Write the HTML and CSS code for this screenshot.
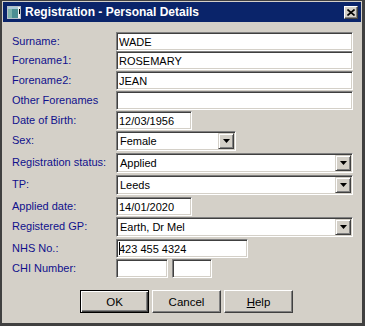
FILE: index.html
```html
<!DOCTYPE html>
<html lang="en">
<head>
<meta charset="UTF-8">
<meta name="viewport" content="width=device-width, initial-scale=1.0">
<title>Registration - Personal Details</title>
<link rel="stylesheet" href="styles.css">
</head>
<body>

<div class="window">
    <div class="titlebar">
        <svg class="app-icon" width="14" height="13" viewBox="0 0 14 13">
            <rect x="0" y="0" width="14" height="13" fill="#b8c0c8"/>
            <rect x="1" y="1" width="10" height="11" fill="#4d8f93"/>
            <rect x="1" y="1" width="4" height="11" fill="#7fb3ac"/>
            <rect x="1" y="1" width="10" height="2" fill="#a9c9d8"/>
            <rect x="11" y="1" width="2" height="11" fill="#f0f0f0"/>
            <rect x="12" y="3" width="1" height="5" fill="#000"/>
        </svg>
        <span class="title">Registration - Personal Details</span>
        <span class="close-btn">
            <svg width="8" height="7" viewBox="0 0 8 7">
                <path d="M0.5 0.5 L7.5 6.5 M7.5 0.5 L0.5 6.5" stroke="#000" stroke-width="1.6" fill="none"/>
            </svg>
        </span>
    </div>

    <div class="content">
        <div class="row row-19">
            <label class="label">Surname:</label>
            <input class="field w-full" type="text" value="WADE">
        </div>
        <div class="row">
            <label class="label">Forename1:</label>
            <input class="field w-full" type="text" value="ROSEMARY">
        </div>
        <div class="row">
            <label class="label">Forename2:</label>
            <input class="field w-full" type="text" value="JEAN">
        </div>
        <div class="row">
            <label class="label">Other Forenames</label>
            <input class="field w-full" type="text" value="">
        </div>
        <div class="row">
            <label class="label">Date of Birth:</label>
            <input class="field w-date" type="text" value="12/03/1956">
        </div>
        <div class="row row-22">
            <label class="label">Sex:</label>
            <div class="combo w-sex">
                <span class="combo-value">Female</span>
                <span class="combo-btn"><svg width="7" height="4" viewBox="0 0 7 4"><polygon points="0,0 7,0 3.5,4" fill="#000"/></svg></span>
            </div>
        </div>
        <div class="row row-22">
            <label class="label">Registration status:</label>
            <div class="combo w-full">
                <span class="combo-value">Applied</span>
                <span class="combo-btn"><svg width="7" height="4" viewBox="0 0 7 4"><polygon points="0,0 7,0 3.5,4" fill="#000"/></svg></span>
            </div>
        </div>
        <div class="row row-22">
            <label class="label">TP:</label>
            <div class="combo w-full">
                <span class="combo-value">Leeds</span>
                <span class="combo-btn"><svg width="7" height="4" viewBox="0 0 7 4"><polygon points="0,0 7,0 3.5,4" fill="#000"/></svg></span>
            </div>
        </div>
        <div class="row">
            <label class="label">Applied date:</label>
            <input class="field w-date" type="text" value="14/01/2020">
        </div>
        <div class="row row-22">
            <label class="label">Registered GP:</label>
            <div class="combo w-full">
                <span class="combo-value">Earth, Dr Mel</span>
                <span class="combo-btn"><svg width="7" height="4" viewBox="0 0 7 4"><polygon points="0,0 7,0 3.5,4" fill="#000"/></svg></span>
            </div>
        </div>
        <div class="row">
            <label class="label">NHS No.:</label>
            <span class="caret-wrap">
                <input class="field w-nhs" type="text" value="423 455 4324">
            </span>
        </div>
        <div class="row row-19">
            <label class="label">CHI Number:</label>
            <input class="field w-chi1" type="text" value="">
            <input class="field w-chi2" type="text" value="">
        </div>

        <div class="buttons">
            <button class="btn btn-default">OK</button>
            <button class="btn">Cancel</button>
            <button class="btn"><u>H</u>elp</button>
        </div>
    </div>
</div>

</body>
</html>
```

FILE: styles.css
```css
body {
    margin: 0;
    background: #000;
    font-family: "Liberation Sans", Arial, sans-serif;
}

.window {
    box-sizing: border-box;
    width: 365px;
    height: 326px;
    background: #d4d0c8;
    border-style: solid;
    border-color: #404040;
    border-width: 1px 3px 3px 2px;
    padding: 1px 1px 0 1px;
}

.titlebar {
    display: flex;
    align-items: center;
    height: 20px;
    padding: 0 3px;
    background: #0a246a;
    color: #fff;
}

.app-icon {
    flex: none;
    display: block;
    margin: 0 4px 0 1px;
}

.title {
    flex: 1;
    font-size: 12px;
    font-weight: bold;
}

.close-btn {
    box-sizing: border-box;
    display: flex;
    flex: none;
    align-items: center;
    justify-content: center;
    width: 14px;
    height: 13px;
    background: #d4d0c8;
    border: 1px solid;
    border-color: #fff #404040 #404040 #fff;
    box-shadow: inset -1px -1px #808080;
}

.content {
    padding: 10px 0 0 9px;
}

.row {
    display: flex;
    align-items: flex-start;
    height: 20px;
}

.row-19 {
    height: 19px;
}

.row-22 {
    height: 22px;
}

.label {
    width: 104px;
    flex: none;
    color: #10108c;
    font-size: 11px;
    line-height: 19px;
}

.field {
    box-sizing: border-box;
    height: 19px;
    margin: 0;
    padding: 0 2px;
    border: 1px solid;
    border-color: #808080 #fff #fff #808080;
    box-shadow: inset 1px 1px #404040, inset -1px -1px #d4d0c8;
    background: #fff;
    color: #000;
    font-family: "Liberation Sans", Arial, sans-serif;
    font-size: 11px;
    outline: none;
}

.w-full { width: 237px; }
.w-date { width: 76px; }
.w-sex { width: 120px; }
.w-nhs { width: 132px; }
.w-chi1 { width: 52px; margin-right: 4px; }
.w-chi2 { width: 40px; }

.combo {
    box-sizing: border-box;
    display: flex;
    height: 20px;
    padding: 1px;
    border: 1px solid;
    border-color: #808080 #fff #fff #808080;
    box-shadow: inset 1px 1px #404040, inset -1px -1px #d4d0c8;
    background: #fff;
}

.combo-value {
    flex: 1;
    padding-left: 2px;
    font-size: 11px;
    line-height: 16px;
}

.combo-btn {
    box-sizing: border-box;
    display: flex;
    align-items: center;
    justify-content: center;
    width: 16px;
    height: 16px;
    background: #d4d0c8;
    border: 1px solid;
    border-color: #d4d0c8 #404040 #404040 #d4d0c8;
    box-shadow: inset 1px 1px #fff, inset -1px -1px #808080;
}

.caret-wrap {
    position: relative;
    display: flex;
}

.caret-wrap::after {
    content: "";
    position: absolute;
    left: 3px;
    top: 3px;
    width: 1px;
    height: 13px;
    background: #000;
}

.buttons {
    display: flex;
    gap: 3px;
    margin: 12px 0 0 68px;
}

.btn {
    box-sizing: border-box;
    width: 69px;
    height: 23px;
    padding: 0;
    background: #d4d0c8;
    border: 1px solid;
    border-color: #fff #404040 #404040 #fff;
    box-shadow: inset -1px -1px #808080;
    color: #000;
    font-family: "Liberation Sans", Arial, sans-serif;
    font-size: 11.5px;
}

.btn-default {
    border-color: #000;
    box-shadow: inset 1px 1px #fff, inset -1px -1px #404040, inset -2px -2px #808080;
}
```
